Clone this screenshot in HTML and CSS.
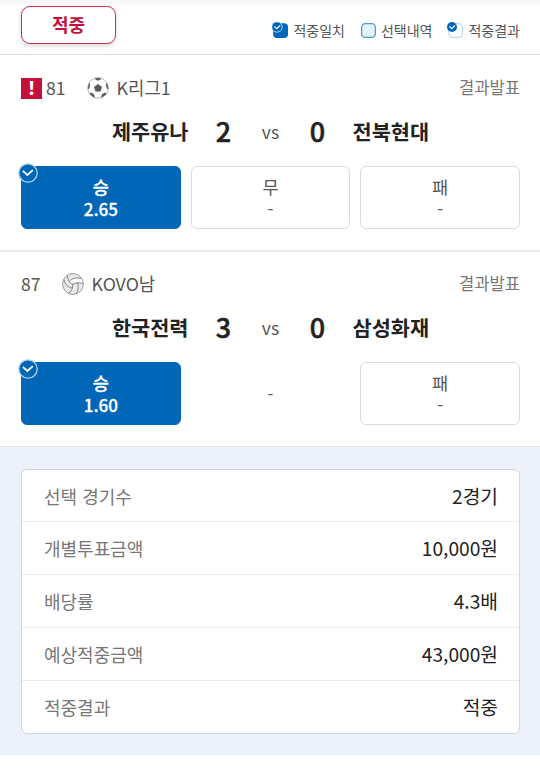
FILE: index.html
```
<!DOCTYPE html>
<html lang="ko">
<head>
    <meta charset="UTF-8">
    <meta name="viewport" content="width=device-width, initial-scale=1.0">
    <title>적중결과</title>
    <link rel="stylesheet" href="styles.css">
</head>
<body>
    <header class="top">
        <span class="result-badge">적중</span>
        <ul class="legend">
            <li>
                <svg width="17" height="17" viewBox="0 0 17 17"><rect x="1.2" y="1.2" width="14.8" height="14.8" rx="3.8" fill="#0067b8"/><circle cx="5" cy="5" r="5.2" fill="#0067b8" stroke="#a9d2f0" stroke-width="1"/><path d="M2.5 4.5l2.3 2.2 3.3-3.3" fill="none" stroke="#fff" stroke-width="1.2"/></svg>
                적중일치
            </li>
            <li>
                <svg width="17" height="17" viewBox="0 0 17 17"><rect x="1.6" y="1.6" width="13.8" height="13.8" rx="3.6" fill="#e3f3fd" stroke="#5a9acb" stroke-width="1.3"/></svg>
                선택내역
            </li>
            <li>
                <svg width="17" height="17" viewBox="0 0 17 17"><rect x="1.8" y="1.6" width="13.8" height="13.8" rx="3.6" fill="#fff" stroke="#c5dcef" stroke-width="1.3"/><circle cx="5" cy="5" r="5" fill="#0067b8"/><path d="M2.5 4.5l2.3 2.2 3.3-3.3" fill="none" stroke="#fff" stroke-width="1.2"/></svg>
                적중결과
            </li>
        </ul>
    </header>

    <section class="game">
        <div class="info">
            <span class="alert">!</span>
            <span class="no">81</span>
            <svg class="ball" width="22" height="22" viewBox="0 0 22 22">
                <defs><clipPath id="ball"><circle cx="11" cy="11" r="10.3"/></clipPath></defs>
                <circle cx="11" cy="11" r="10.3" fill="#fff"/>
                <g clip-path="url(#ball)" fill="#55585d">
                    <path d="M11 7l4 2.9-1.5 4.6h-5L7 9.9z"/>
                    <path d="M7 0h8l-1 2.3-3 1.5-3-1.5zM22 5.5v8l-2.2-2-1-3.2 1-2.8zM0 5.5v8l2.2-2 1-3.2-1-2.8zM14 20.8l.8-3.2 2.7-1.8 2.8.2-4 6zM8 20.8l-.8-3.2-2.7-1.8-2.8.2 4 6z"/>
                </g>
                <circle cx="11" cy="11" r="10.3" fill="none" stroke="#97999d" stroke-width=".7"/>
            </svg>
            <span class="league">K리그1</span>
            <span class="state">결과발표</span>
        </div>
        <div class="match">
            <span class="team home">제주유나</span>
            <span class="score">2</span>
            <span class="vs">vs</span>
            <span class="score">0</span>
            <span class="team away">전북현대</span>
        </div>
        <div class="options">
            <div class="option hit">
                <svg class="check" width="20" height="20" viewBox="0 0 20 20"><circle cx="10" cy="10" r="9.2" fill="#0067b8" stroke="#a9d0ec" stroke-width="1.3"/><path d="M4.8 7.8l4.6 4.2 5.4-4.9" fill="none" stroke="#fff" stroke-width="1.8"/></svg>
                <span>승</span>
                <span class="odds">2.65</span>
            </div>
            <div class="option"><span>무</span><span class="odds">-</span></div>
            <div class="option"><span>패</span><span class="odds">-</span></div>
        </div>
    </section>

    <section class="game">
        <div class="info">
            <span class="no">87</span>
            <svg class="ball" width="22" height="22" viewBox="0 0 22 22">
                <circle cx="11" cy="11" r="10.4" fill="#e9e9ea" stroke="#85868a" stroke-width=".8"/>
                <path d="M7.4 8.3C10 5.3 15 4 19.5 5.8l1.6 4.7c-3.3-1.1-7.1-1-10.3.8z" fill="#fafafa"/>
                <g fill="none" stroke="#77797d" stroke-width=".9">
                    <path d="M10.8 11.3C7.5 9.8 5.5 6.5 5.3 2.6M10.8 11.3c3.2-1.8 7-1.9 10.3-.8M10.8 11.3c.3 3.6-1.4 7.2-4.3 9"/>
                    <path d="M7.4 8.3C10 5.3 15 4 19.5 5.8"/>
                    <path d="M15.5 9.8c1.4 3.5.8 7.8-1.4 11"/>
                    <path d="M10.4 15C6.5 14.8 2.8 11.8 2 6.4"/>
                </g>
            </svg>
            <span class="league">KOVO남</span>
            <span class="state">결과발표</span>
        </div>
        <div class="match">
            <span class="team home">한국전력</span>
            <span class="score">3</span>
            <span class="vs">vs</span>
            <span class="score">0</span>
            <span class="team away">삼성화재</span>
        </div>
        <div class="options">
            <div class="option hit">
                <svg class="check" width="20" height="20" viewBox="0 0 20 20"><circle cx="10" cy="10" r="9.2" fill="#0067b8" stroke="#a9d0ec" stroke-width="1.3"/><path d="M4.8 7.8l4.6 4.2 5.4-4.9" fill="none" stroke="#fff" stroke-width="1.8"/></svg>
                <span>승</span>
                <span class="odds">1.60</span>
            </div>
            <div class="option none"><span class="odds">-</span></div>
            <div class="option"><span>패</span><span class="odds">-</span></div>
        </div>
    </section>

    <section class="summary">
        <dl>
            <div class="row"><dt>선택 경기수</dt><dd>2경기</dd></div>
            <div class="row"><dt>개별투표금액</dt><dd>10,000원</dd></div>
            <div class="row"><dt>배당률</dt><dd>4.3배</dd></div>
            <div class="row"><dt>예상적중금액</dt><dd>43,000원</dd></div>
            <div class="row"><dt>적중결과</dt><dd>적중</dd></div>
        </dl>
    </section>
</body>
</html>
```
FILE: styles.css
```
* { box-sizing: border-box; }
body { margin: 0; background: #fff; color: #555; font-family: 'Noto Sans CJK KR', sans-serif; font-size: 17.6px; }
ul, dl, dd { margin: 0; padding: 0; list-style: none; }
svg { display: block; flex: none; }

.top { display: flex; justify-content: space-between; align-items: flex-start; height: 55px; padding: 6px 20px 0 21px; border-bottom: 1px solid #dcdcdc; background: linear-gradient(#f6f6f6, #fff 8px); }
.result-badge { width: 95px; height: 38px; line-height: 35px; border: 1px solid #c9304f; border-radius: 9px; background: #fff; box-shadow: 0 2px 5px rgba(0,0,0,0.15); color: #c3113c; font-size: 18px; font-weight: bold; text-align: center; }
.legend { display: flex; gap: 15px; padding-top: 16px; font-size: 14px; line-height: 17px; }
.legend li { display: flex; gap: 4px; }

.game { height: 197px; padding: 22px 20px 0 21px; border-bottom: 2px solid #ececec; }
.game + .game { height: 195px; padding-top: 21px; border-bottom: 1px solid #e3e5e8; }
.info { display: flex; align-items: center; height: 22px; line-height: 22px; }
.alert { width: 21px; height: 21px; margin-right: 4px; background: #c3113c; color: #fff; font-size: 18px; line-height: 18px; font-weight: 900; text-align: center; }
.ball { margin: 0 8px 0 21px; }
.league { height: 22px; font-size: 17.8px; line-height: 21px; }
.state { margin-left: auto; color: #777; font-size: 16.6px; line-height: 20px; height: 22px; }
.match { display: flex; justify-content: center; align-items: center; height: 32px; margin-top: 16px; line-height: 32px; color: #222; }
.team { width: 96px; font-size: 20.8px; font-weight: bold; }
.home { text-align: right; }
.score { width: 70px; font-size: 27px; font-weight: 500; -webkit-text-stroke: 0.5px #222; text-align: center; }
.vs { width: 24px; padding-top: 1px; color: #555; text-align: center; }
.options { display: grid; grid-template-columns: repeat(3, 1fr); gap: 10px; margin-top: 19px; }
.option { position: relative; display: flex; flex-direction: column; justify-content: center; align-items: center; height: 63px; border: 1px solid #dcdcdc; border-radius: 6px; line-height: 22px; }
.option.hit { border-color: #0067b8; background: #0067b8; color: #fff; font-weight: 500; -webkit-text-stroke: 0.3px #fff; }
.option.none { border: none; }
.odds { font-size: 17px; }
.check { position: absolute; top: -4px; left: -4px; }

.summary { height: 308px; padding: 22px 20px 0 21px; background: #edf1f9; }
.summary dl { height: 265px; border: 1px solid #d0d6dc; border-radius: 6px; background: #fff; }
.row { display: flex; justify-content: space-between; align-items: center; height: 53px; padding: 0 21px 0 22px; border-bottom: 1px solid #ececec; }
.row:first-child { height: 52px; }
.row:last-child { height: 52px; border-bottom: none; }
dt { color: #777; font-size: 18px; }
dd { color: #222; font-size: 19.2px; }
```
